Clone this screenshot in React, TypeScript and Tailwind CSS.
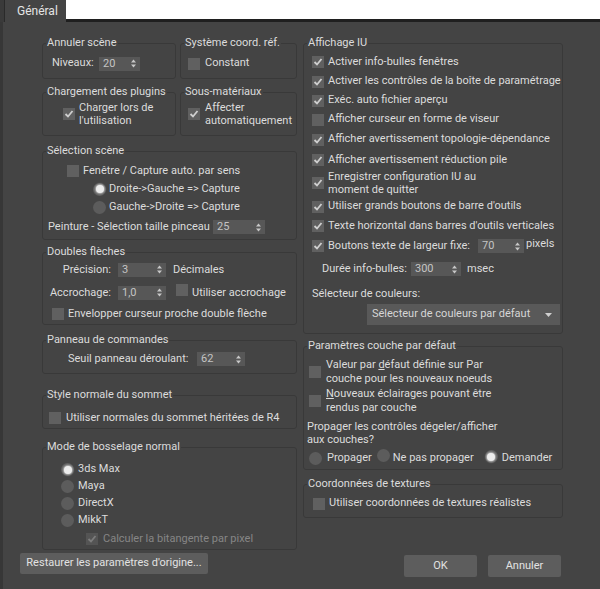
import React from "react";

const FONT = "[font-family:Roboto,'Liberation_Sans',sans-serif]";

function Group({ title, className, children }: { title: string; className?: string; children?: React.ReactNode }) {
    return (
        <fieldset className={`border border-[#393939] rounded-[3px] ${className ?? ""}`}>
            <legend className="ml-[3px] px-[1px] leading-[14px]">{title}</legend>
            {children}
        </fieldset>
    );
}

function Check({ on = false, dim = false }: { on?: boolean; dim?: boolean }) {
    return (
        <span className={`inline-flex shrink-0 w-[12px] h-[12px] items-center justify-center ${dim ? "bg-[#545454]" : "bg-[#606060]"}`}>
            {on && (
                <svg width="10" height="10" viewBox="0 0 10 10">
                    <polyline points="1.5,5 4,7.5 8.5,2" fill="none" stroke={dim ? "#7c7c7c" : "#cfcfcf"} strokeWidth="1.8" />
                </svg>
            )}
        </span>
    );
}

function Radio({ on = false }: { on?: boolean }) {
    return (
        <span className="inline-flex shrink-0 w-[13px] h-[13px] rounded-full bg-[#5c5c5c] items-center justify-center">
            {on && <span className="w-[8px] h-[8px] rounded-full bg-[#ececec] shadow-[0_0_2px_1px_#bdbdbd]" />}
        </span>
    );
}

function Spin({ value, w }: { value: string; w: string }) {
    return (
        <span className={`inline-flex shrink-0 h-[14px] ${w} bg-[#575757] items-center justify-between pl-[4px] pr-[4px] text-[#c4c4c4]`}>
            <span className="leading-[14px]">{value}</span>
            <svg width="5" height="9" viewBox="0 0 5 9">
                <polygon points="0,3.5 2.5,0.5 5,3.5" fill="#c8c8c8" />
                <polygon points="0,5.5 2.5,8.5 5,5.5" fill="#c8c8c8" />
            </svg>
        </span>
    );
}

export default function App() {
    return (
        <div className={`w-[600px] h-[589px] bg-[#444444] text-[#dcdcdc] text-[11px] ${FONT} whitespace-nowrap flex flex-col overflow-hidden`}>
            {/* tab strip */}
            <div className="flex h-[22px] shrink-0">
                <div className="w-[4px] bg-[#3a3a3a]" />
                <div className="w-[62px] bg-[#444444] border-l border-[#2a2a2a] flex items-center pl-[12px] text-[#e4e4e4] text-[12px]">
                    Général
                </div>
                <div className="flex-1 flex flex-col">
                    <div className="h-[19px] bg-white" />
                    <div className="h-[3px] bg-[#1f1f1f]" />
                </div>
            </div>

            <div className="flex flex-1 border-l-[3px] border-[#373737] pl-[17px]">
                {/* left column */}
                <div className="flex flex-col w-[277px]">
                    <div className="pl-[22px] flex flex-col">
                        <div className="flex gap-[4px] mt-[14px]">
                            <Group title="Annuler scène" className="w-[134px] h-[43px]">
                                <div className="flex items-center h-[15px] mt-[6px] pl-[9px]">
                                    <span className="w-[47px]">Niveaux:</span>
                                    <Spin value="20" w="w-[41px]" />
                                </div>
                            </Group>
                            <Group title="Système coord. réf." className="w-[117px] h-[43px]">
                                <div className="flex items-center h-[15px] mt-[6px] pl-[7px] gap-[5px]">
                                    <Check />
                                    <span>Constant</span>
                                </div>
                            </Group>
                        </div>
                        <div className="flex gap-[4px] mt-[6px]">
                            <Group title="Chargement des plugins" className="w-[134px] h-[51px]">
                                <div className="flex items-center mt-[2px] pl-[20px] gap-[4px]">
                                    <Check on />
                                    <span className="leading-[13px]">Charger lors de<br />l'utilisation</span>
                                </div>
                            </Group>
                            <Group title="Sous-matériaux" className="w-[117px] h-[51px]">
                                <div className="flex items-center mt-[2px] pl-[7px] gap-[5px]">
                                    <Check on />
                                    <span className="leading-[13px]">Affecter<br />automatiquement</span>
                                </div>
                            </Group>
                        </div>

                        <Group title="Sélection scène" className="mt-[8px] h-[96px]">
                            <div className="flex items-center h-[18px] mt-[4px] pl-[24px] gap-[4px]">
                                <Check />
                                <span>Fenêtre / Capture auto. par sens</span>
                            </div>
                            <div className="flex items-center h-[18px] pl-[50px] gap-[3px]">
                                <Radio on />
                                <span>Droite-&gt;Gauche =&gt; Capture</span>
                            </div>
                            <div className="flex items-center h-[18px] pl-[50px] gap-[3px]">
                                <Radio />
                                <span>Gauche-&gt;Droite =&gt; Capture</span>
                            </div>
                            <div className="flex items-center h-[18px] mt-[2px] pl-[5px]">
                                <span className="w-[165px]">Peinture - Sélection taille pinceau</span>
                                <Spin value="25" w="w-[52px]" />
                            </div>
                        </Group>

                        <Group title="Doubles flèches" className="mt-[5px] h-[80px]">
                            <div className="flex items-center h-[18px] mt-[2px]">
                                <span className="w-[68px] text-right">Précision:</span>
                                <span className="ml-[7px]"><Spin value="3" w="w-[48px]" /></span>
                                <span className="ml-[7px]">Décimales</span>
                            </div>
                            <div className="flex items-center h-[18px] mt-[5px]">
                                <span className="w-[68px] text-right">Accrochage:</span>
                                <span className="ml-[7px]"><Spin value="1,0" w="w-[48px]" /></span>
                                <span className="ml-[10px]"><Check /></span>
                                <span className="ml-[4px]">Utiliser accrochage</span>
                            </div>
                            <div className="flex items-center h-[18px] mt-[3px] pl-[9px] gap-[4px]">
                                <Check />
                                <span>Envelopper curseur proche double flèche</span>
                            </div>
                        </Group>

                        <Group title="Panneau de commandes" className="mt-[8px] h-[41px]">
                            <div className="flex items-center h-[18px] mt-[3px] pl-[25px]">
                                <span className="w-[129px]">Seuil panneau déroulant:</span>
                                <Spin value="62" w="w-[48px]" />
                            </div>
                        </Group>

                        <Group title="Style normale du sommet" className="mt-[14px] h-[41px]">
                            <div className="flex items-center h-[18px] mt-[7px] pl-[6px] gap-[5px]">
                                <Check />
                                <span>Utiliser normales du sommet héritées de R4</span>
                            </div>
                        </Group>

                        <Group title="Mode de bosselage normal" className="mt-[11px] h-[110px]">
                            <div className="mt-[7px] pl-[18px] flex flex-col">
                                {["3ds Max", "Maya", "DirectX", "MikkT"].map((m, i) => (
                                    <div key={m} className="flex items-center h-[17px] gap-[4px]">
                                        <Radio on={i === 0} />
                                        <span>{m}</span>
                                    </div>
                                ))}
                            </div>
                            <div className="flex items-center h-[18px] mt-[1px] pl-[43px] gap-[5px] text-[#868686]">
                                <Check on dim />
                                <span>Calculer la bitangente par pixel</span>
                            </div>
                        </Group>
                    </div>
                    <button className="mt-[3px] w-[188px] h-[21px] bg-[#5d5d5d] rounded-[2px] text-[#e2e2e2]">
                        Restaurer les paramètres d'origine...
                    </button>
                </div>

                {/* right column */}
                <div className="flex flex-col w-[260px] ml-[6px]">
                    <Group title="Affichage IU" className="mt-[14px] h-[298px]">
                        <div className="flex flex-col pl-[8px] mt-[2px]">
                            {[
                                ["Activer info-bulles fenêtres", true, "h-[20px]"],
                                ["Activer les contrôles de la boîte de paramétrage", true, "h-[19px]"],
                                ["Exéc. auto fichier aperçu", true, "h-[19px]"],
                                ["Afficher curseur en forme de viseur", false, "h-[19px]"],
                                ["Afficher avertissement topologie-dépendance", true, "h-[21px]"],
                                ["Afficher avertissement réduction pile", true, "h-[20px]"],
                            ].map(([t, on, h]) => (
                                <div key={t as string} className={`flex items-center gap-[4px] ${h}`}>
                                    <Check on={on as boolean} />
                                    <span>{t as string}</span>
                                </div>
                            ))}
                            <div className="flex items-center gap-[4px] h-[25px]">
                                <Check on />
                                <span className="leading-[13px]">Enregistrer configuration IU au<br />moment de quitter</span>
                            </div>
                            <div className="flex items-center gap-[4px] h-[19px] mt-[2px]">
                                <Check on />
                                <span>Utiliser grands boutons de barre d'outils</span>
                            </div>
                            <div className="flex items-center gap-[4px] h-[20px]">
                                <Check on />
                                <span>Texte horizontal dans barres d'outils verticales</span>
                            </div>
                            <div className="flex items-center gap-[4px] h-[20px]">
                                <Check on />
                                <span className="w-[146px]">Boutons texte de largeur fixe:</span>
                                <Spin value="70" w="w-[46px]" />
                                <span className="-ml-[2px] -mt-[3px]">pixels</span>
                            </div>
                            <div className="flex items-center h-[20px] mt-[3px] pl-[10px]">
                                <span className="w-[89px]">Durée info-bulles:</span>
                                <Spin value="300" w="w-[50px]" />
                                <span className="ml-[6px]">msec</span>
                            </div>
                            <div className="flex items-center h-[20px] mt-[5px]">Sélecteur de couleurs:</div>
                            <div className="ml-[55px] w-[193px] h-[21px] bg-[#595959] flex items-center justify-between pl-[5px] pr-[8px] text-[#d6d6d6]">
                                <span>Sélecteur de couleurs par défaut</span>
                                <svg width="7" height="4" viewBox="0 0 7 4">
                                    <polygon points="0,0 7,0 3.5,4" fill="#cfcfcf" />
                                </svg>
                            </div>
                        </div>
                    </Group>

                    <Group title="Paramètres couche par défaut" className="mt-[5px] h-[131px]">
                        <div className="flex flex-col mt-[5px]">
                            <div className="flex items-center h-[28px] pl-[5px] gap-[5px]">
                                <Check />
                                <span className="leading-[14px]">Valeur par <u>d</u>éfaut définie sur Par<br />couche pour les nouveaux noeuds</span>
                            </div>
                            <div className="flex items-center h-[28px] mt-[1px] pl-[5px] gap-[5px]">
                                <Check />
                                <span className="leading-[14px]"><u>N</u>ouveaux éclairages pouvant être<br />rendus par couche</span>
                            </div>
                            <div className="mt-[5px] pl-[3px] leading-[13px]">
                                Propager les contrôles dégeler/afficher<br />aux couches?
                            </div>
                            <div className="flex items-center h-[18px] mt-[3px] pl-[5px]">
                                <Radio />
                                <span className="ml-[5px]">Propager</span>
                                <span className="ml-[5px]"><Radio /></span>
                                <span className="ml-[3px]">Ne pas propager</span>
                                <span className="ml-[11px]"><Radio on /></span>
                                <span className="ml-[4px]">Demander</span>
                            </div>
                        </div>
                    </Group>

                    <Group title="Coordonnées de textures" className="mt-[7px] h-[41px]">
                        <div className="flex items-center h-[19px] mt-[3px] pl-[9px] gap-[4px]">
                            <Check />
                            <span>Utiliser coordonnées de textures réalistes</span>
                        </div>
                    </Group>

                    <div className="flex justify-end gap-[11px] mt-[37px] pr-[2px]">
                        <button className="w-[73px] h-[22px] bg-[#5d5d5d] rounded-[2px] text-[#e2e2e2]">OK</button>
                        <button className="w-[73px] h-[22px] bg-[#5d5d5d] rounded-[2px] text-[#e2e2e2]">Annuler</button>
                    </div>
                </div>
            </div>
        </div>
    );
}
